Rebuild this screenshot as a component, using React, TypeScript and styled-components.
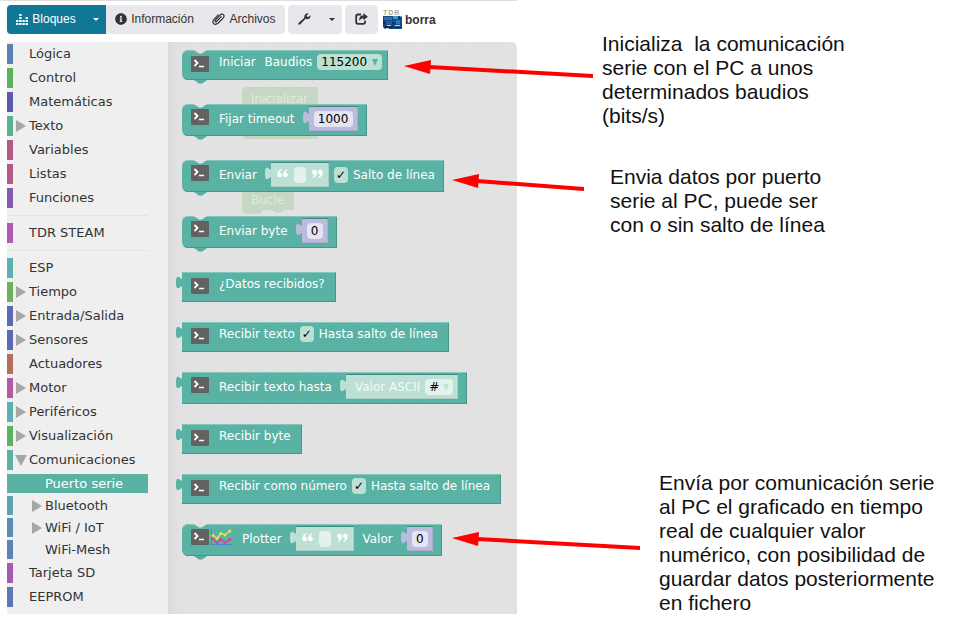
import React from 'react';
import styled, { createGlobalStyle } from 'styled-components';
import { FaInfoCircle } from 'react-icons/fa';

const TEAL = '#5ab2a5';
const MINT = '#bde0d4';
const LILAC = '#bcbbde';
const CANVAS = '#e2e2e2';

const GlobalStyle = createGlobalStyle`
  * { box-sizing: border-box; }
  body { margin: 0; background: #fff; }
  button, input, select { font: inherit; color: inherit; margin: 0; padding: 0; border: 0; }
`;

const Page = styled.div`
  position: relative;
  display: grid;
  grid-template-columns: minmax(0, 517px) minmax(0, 1fr);
  min-height: 100vh;
`;

const Editor = styled.main`
  display: flex;
  flex-direction: column;
  padding: 4px 0 10px 7px;
  border-top: 1px solid #dedede;
`;

/* ---------- Toolbar ---------- */

const Toolbar = styled.header`
  display: flex;
  align-items: center;
  height: 29px;
  margin-bottom: 8px;
  gap: 3px;
  font: 12px 'Liberation Sans', Arial, sans-serif;
  color: #333;
`;

const ButtonGroup = styled.div`
  display: flex;
  height: 29px;
  border-radius: 4px;
  overflow: hidden;
`;

const ToolButton = styled.button<{ $primary?: boolean; $width: number }>`
  display: flex;
  align-items: center;
  justify-content: center;
  gap: 4px;
  width: ${(p) => p.$width}px;
  height: 29px;
  padding-bottom: 1px;
  white-space: nowrap;
  background: ${(p) => (p.$primary ? '#107896' : '#e7e7ec')};
  color: ${(p) => (p.$primary ? '#fff' : '#333')};
  & + & { border-left: ${(p) => (p.$primary ? '1px solid #0c6580' : '0')}; }
`;

const Caret = styled.span`
  border: 3px solid transparent;
  border-top-color: currentColor;
  border-bottom: 0;
`;

const Project = styled.div`
  display: flex;
  align-items: center;
  gap: 2px;
  margin-left: 2px;
  font-weight: bold;
`;

/* ---------- Category tree ---------- */

const Workspace = styled.div`
  display: flex;
  flex: 1;
  border-top-right-radius: 6px;
  overflow: hidden;
`;

const Tree = styled.nav`
  flex: 0 0 161px;
  padding-top: 2px;
  background: #efefef;
  font: 13px/20px 'DejaVu Sans', sans-serif;
  color: #333;
`;

const TreeList = styled.ul<{ $nested?: boolean }>`
  display: flex;
  flex-direction: column;
  gap: ${(p) => (p.$nested ? 3 : 4)}px;
  width: 141px;
  margin: 0;
  padding: 0;
  list-style: none;
`;

const TreeRow = styled.a<{ $color: string; $nested?: boolean; $selected?: boolean }>`
  display: flex;
  align-items: center;
  height: ${(p) => (p.$nested ? 19 : 20)}px;
  padding-left: ${(p) => (p.$nested ? 18 : 2)}px;
  border-left: 6px solid ${(p) => p.$color};
  background: ${(p) => (p.$selected ? p.$color : 'transparent')};
  color: ${(p) => (p.$selected ? '#fff' : 'inherit')};
  text-decoration: none;
  white-space: nowrap;
`;

const Marker = styled.span`
  display: flex;
  flex: 0 0 14px;
`;

const TreeDivider = styled.li`
  height: 1px;
  margin: 3px 0;
  background: #e3e3e3;
`;

/* ---------- Block canvas ---------- */

const Canvas = styled.section`
  position: relative;
  flex: 1;
  min-width: 0;
  padding: 8px 0 0 14px;
  background:
    linear-gradient(90deg, #dadada, transparent 10px),
    radial-gradient(circle at 1px 1px, #dcdcdc 1px, transparent 1px) 7px 2px / 25px 25px,
    radial-gradient(circle at 1px 1px, #dcdcdc 1px, transparent 1px) 19px 2px / 25px 25px,
    radial-gradient(circle at 1px 1px, #dcdcdc 1px, transparent 1px) 7px 14px / 25px 25px,
    radial-gradient(circle at 1px 1px, #dcdcdc 1px, transparent 1px) 19px 14px / 25px 25px,
    ${CANVAS};
  font: 12px 'DejaVu Sans', sans-serif;
`;

const GhostBlock = styled.div<{ $x: number; $y: number; $w: number; $h: number }>`
  position: absolute;
  left: ${(p) => p.$x}px;
  top: ${(p) => p.$y}px;
  width: ${(p) => p.$w}px;
  height: ${(p) => p.$h}px;
  padding: 5px 9px;
  border-radius: 5px 0 0 5px;
  background: #c6d8c4;
  color: #e0e8de;
`;

const GhostBottom = styled.svg`
  position: absolute;
  left: 18px;
  bottom: 0;
`;

const BlockList = styled.div`
  position: relative;
  display: flex;
  flex-direction: column;
  align-items: flex-start;
`;

const BlockBody = styled.div<{ $tall?: boolean; $value?: boolean; $end: number }>`
  position: relative;
  display: flex;
  align-items: flex-start;
  height: ${(p) => (p.$tall ? 32 : 30)}px;
  margin-bottom: ${(p) => (p.$value ? 20 : 24)}px;
  padding: 0 ${(p) => p.$end}px 0 9px;
  border-radius: ${(p) => (p.$value ? '0' : '6px 0 0 6px')};
  background: ${TEAL};
  box-shadow: inset 0 1px #84c6bc, inset -1px -1px #48958a;
  color: #fff;
  white-space: nowrap;
`;

const BlockRow = styled.div<{ $tall?: boolean }>`
  display: flex;
  align-items: center;
  gap: 5px;
  height: ${(p) => (p.$tall ? 30 : 24)}px;
`;

const BlockIcons = styled.span<{ $tall?: boolean }>`
  display: flex;
  gap: 2px;
  margin: ${(p) => (p.$tall ? 5 : 6)}px 10px 0 0;
`;

const TopNotch = styled.svg`
  position: absolute;
  left: 12px;
  top: 0;
`;

const BottomTab = styled.svg`
  position: absolute;
  left: 12px;
  top: 100%;
`;

const OutputTab = styled.svg`
  position: absolute;
  left: -6px;
  top: 4px;
`;

const CheckLabel = styled.label`
  display: flex;
  align-items: center;
  gap: 5px;
`;

const Check = styled.input`
  display: flex;
  align-items: center;
  justify-content: center;
  appearance: none;
  width: 14px;
  height: 16px;
  border-radius: 4px;
  background: ${MINT};
  color: #000;
  font-weight: bold;
  line-height: 16px;
  &:checked::after { content: '✓'; }
`;

const SelectWrap = styled.span<{ $w: number; $pale?: boolean }>`
  position: relative;
  display: flex;
  width: ${(p) => p.$w}px;
  height: 16px;
  border-radius: 4px;
  background: ${(p) => (p.$pale ? '#e4f2ee' : MINT)};
  color: ${(p) => (p.$pale ? MINT : TEAL)};
`;

const Select = styled.select`
  appearance: none;
  width: 100%;
  padding-left: 4px;
  background: transparent;
  color: #000;
  line-height: 16px;
`;

const SelectArrow = styled.svg`
  position: absolute;
  right: 4px;
  top: 5px;
  pointer-events: none;
`;

const Nested = styled.span<{ $color: string }>`
  position: relative;
  display: flex;
  align-items: center;
  gap: 5px;
  height: 24px;
  padding: 0 5px;
  margin-left: 9px;
  background: ${(p) => p.$color};
  box-shadow: 0 -1px #418a80, inset -1px -1px rgba(0, 0, 0, 0.08);
`;

const NestedLabel = styled.span`
  padding-left: 4px;
  color: #f2faf7;
`;

const QuoteSvg = styled.svg`
  margin: 0 1px 3px;
`;

const Field = styled.input<{ $w: number; $pale?: boolean }>`
  width: ${(p) => p.$w}px;
  height: 16px;
  border-radius: 4px;
  background: ${(p) => (p.$pale ? '#e4f2ee' : '#e5e4f3')};
  color: #000;
  text-align: center;
`;

/* ---------- Annotations ---------- */

const Notes = styled.aside`
  display: flex;
  flex-direction: column;
  padding-top: 32px;
  font: 21px/24px 'Liberation Sans', Arial, sans-serif;
  color: #111;
`;

const Note = styled.p<{ $indent: number; $gap: number }>`
  margin: 0 0 ${(p) => p.$gap}px ${(p) => p.$indent}px;
  white-space: pre;
`;

const ArrowSvg = styled.svg<{ $x: number; $y: number }>`
  position: absolute;
  left: ${(p) => p.$x}px;
  top: ${(p) => p.$y}px;
  pointer-events: none;
`;

/* ---------- Icons ---------- */

const BlocksIcon = () => (
  <svg width="12" height="11" viewBox="0 0 12 11" fill="currentColor" aria-hidden="true">
    <path d="M0 9h2.400v2H0zM0 6h2.400v2H0zM3.200 9h2.400v2H3.200zM3.200 6h2.400v2H3.200zM3.200 3h2.400v2H3.200zM3.200 0h2.400v2H3.200zM6.400 9h2.400v2H6.400zM6.400 6h2.400v2H6.400zM9.600 9H12v2H9.600zM9.600 6H12v2H9.600zM9.600 3H12v2H9.600z" />
  </svg>
);

const ClipIcon = () => (
  <svg width="13" height="12" viewBox="0 0 13 12" fill="none" stroke="currentColor" strokeWidth="1.200" strokeLinecap="round" aria-hidden="true">
    <path d="M9.200 3.600 4.800 8.300Q3.800 9.200 3.300 8.500Q2.800 7.900 3.600 7L8 2.200Q9.700.4 11.200 1.500Q12.900 2.900 11.300 4.900L6.300 10Q3.600 12.200 1.700 10.700Q.1 8.900 1.600 6.900L6.200 1.900" />
  </svg>
);

const WrenchIcon = () => (
  <svg width="13" height="12" viewBox="0 0 13 12" fill="currentColor" aria-hidden="true">
    <path d="M10.600.4 8.700 2.500 9 3.700 10.200 4 12.400 2.200Q13 5.400 10 6.100Q8.600 6.300 7.600 5.800L2.300 11.300Q1.400 12.100.6 11.400Q-.1 10.600.7 9.700L6.400 4.700Q5.900 2.600 7.300 1.200Q8.800-.1 10.600.4Z" />
  </svg>
);

const ExportIcon = () => (
  <svg width="13" height="12" viewBox="0 0 13 12" fill="none" aria-hidden="true">
    <path d="M6 1.500H3Q1.200 1.500 1.200 3.300V9Q1.200 10.800 3 10.800H8.300Q10.100 10.800 10.100 9V7.800" stroke="#333" strokeWidth="1.800" />
    <path d="M8.500 0 12.800 3.700 8.500 7.300V5.200Q5.500 5 4.300 8Q3.600 2.500 8.500 2.200Z" fill="#333" />
  </svg>
);

const BoardIcon = () => (
  <svg width="20" height="21" viewBox="0 0 20 21" aria-hidden="true">
    <text x="0" y="6" fontSize="7" letterSpacing="1" fill="#a8a8a8" fontFamily="Liberation Sans">TDR</text>
    <path d="M0 7h17l2 1v12H2L0 18z" fill="#164a86" />
    <path d="M1 8h8v3H1z" fill="#2c6cb0" />
    <path d="M10 7h5v3h-5z" fill="#3a9ad8" />
    <path d="M3 12h9v3H3z" fill="#1c5da6" />
    <path d="M13 11h4v4h-4z" fill="#2a78bc" />
    <path d="M0 12h2v3H0zM1 17h9v2H2zM12 18h6v1h-6z" fill="#142a44" />
    <path d="M4 16h4v1H4zM12 16h5v1h-5zM3 19h3v1H3z" fill="#c3d3d6" />
    <path d="M15 8h2v2h-2z" fill="#10294c" />
    <path d="M9 13h3v2H9z" fill="#12345f" />
  </svg>
);

const TerminalIcon = () => (
  <svg width="18" height="16" viewBox="0 0 18 16" aria-hidden="true">
    <rect width="18" height="16" rx="1" fill="#626262" />
    <path d="M3.500 4 6.500 7 3.500 10" fill="none" stroke="#fff" strokeWidth="1.800" />
    <path d="M8 10.500h5" stroke="#fff" strokeWidth="1.500" />
  </svg>
);

const PlotIcon = () => (
  <svg width="21" height="16" viewBox="0 0 21 16" fill="none" aria-hidden="true">
    <path d="M.5 0v15.500H21" stroke="#3f8fd0" />
    <path d="M2 6.500 6 9.500 10 4.500 14 6 19.500 1.500" stroke="#e6e645" strokeWidth="1.500" />
    <path d="M2 10 6 14 10 10.500 14 13.500 19.500 10" stroke="#d8409c" strokeWidth="1.500" />
    <g fill="#e6e645"><circle cx="2" cy="6.500" r="1.400" /><circle cx="6" cy="9.500" r="1.400" /><circle cx="10" cy="4.500" r="1.400" /><circle cx="14" cy="6" r="1.400" /><circle cx="19" cy="2" r="1.400" /></g>
    <g fill="#d8409c"><circle cx="2" cy="10" r="1.400" /><circle cx="6" cy="14" r="1.400" /><circle cx="10" cy="10.500" r="1.400" /><circle cx="14" cy="13.500" r="1.400" /><circle cx="19" cy="10.500" r="1.400" /></g>
  </svg>
);

const QuoteIcon = ({ closing }: { closing?: boolean }) => (
  <QuoteSvg width="11" height="9" viewBox="0 0 11 9" fill="#fff" aria-hidden="true">
    <g transform={closing ? 'rotate(180 5.5 4.5)' : undefined}>
      <path d="M4.700.8Q2.900 1.800 2.800 3.500A2.400 2.400 0 1 1 .3 6Q0 2 4.300 0z" />
      <path d="M10.500.8Q8.700 1.800 8.600 3.500A2.400 2.400 0 1 1 6.100 6Q5.800 2 10.100 0z" />
    </g>
  </QuoteSvg>
);

const Tab = ({ color }: { color: string }) => (
  <OutputTab width="7" height="13" viewBox="0 0 8 15" preserveAspectRatio="none" aria-hidden="true">
    <path d="M8 0c0 10-8-8-8 7.500s8-2.500 8 7.500z" fill={color} />
  </OutputTab>
);

/* ---------- Blocks ---------- */

type BlockProps = {
  tall?: boolean;
  value?: boolean;
  plot?: boolean;
  end?: number;
  children: React.ReactNode;
};

const Block = ({ tall, value, plot, end = tall ? 9 : 11, children }: BlockProps) => (
  <BlockBody $tall={tall} $value={value} $end={end}>
    {value ? (
      <Tab color={TEAL} />
    ) : (
      <>
        <TopNotch width="13" height="4" viewBox="0 0 13 4" aria-hidden="true">
          <path d="M0 0 5 3.500H8L13 0z" fill={CANVAS} />
        </TopNotch>
        <BottomTab width="13" height="4" viewBox="0 0 13 4" aria-hidden="true">
          <path d="M0 0 5 3.500H8L13 0z" fill="#4d9f93" />
          <path d="M0 0 5 2.500H8L13 0z" fill={TEAL} />
        </BottomTab>
      </>
    )}
    <BlockIcons $tall={tall}>
      <TerminalIcon />
      {plot && <PlotIcon />}
    </BlockIcons>
    <BlockRow $tall={tall}>{children}</BlockRow>
  </BlockBody>
);

const NumberValue = ({ value, width, label }: { value: string; width: number; label: string }) => (
  <Nested $color={LILAC}>
    <Tab color={LILAC} />
    <Field $w={width} defaultValue={value} aria-label={label} />
  </Nested>
);

const TextValue = ({ label }: { label: string }) => (
  <Nested $color={MINT}>
    <Tab color={MINT} />
    <QuoteIcon />
    <Field $w={12} $pale aria-label={label} />
    <QuoteIcon closing />
  </Nested>
);

const Dropdown = ({ options, width, pale, label }: { options: string[]; width: number; pale?: boolean; label: string }) => (
  <SelectWrap $w={width} $pale={pale}>
    <Select aria-label={label}>
      {options.map((o) => <option key={o}>{o}</option>)}
    </Select>
    <SelectArrow width="6" height="7" viewBox="0 0 6 7" aria-hidden="true">
      <path d="M0 0h6L3 7z" fill="currentColor" />
    </SelectArrow>
  </SelectWrap>
);

const Toggle = ({ children }: { children: string }) => (
  <CheckLabel><Check type="checkbox" defaultChecked />{children}</CheckLabel>
);

/* ---------- Tree data ---------- */

type Category = {
  name: string;
  color: string;
  marker?: 'closed' | 'open';
  selected?: boolean;
  children?: Category[];
};

const groups: Category[][] = [
  [
    { name: 'Lógica', color: '#5b80b2' },
    { name: 'Control', color: '#5ab25a' },
    { name: 'Matemáticas', color: '#5b59b0' },
    { name: 'Texto', color: '#5ab28e', marker: 'closed' },
    { name: 'Variables', color: '#b25a84' },
    { name: 'Listas', color: '#b25a84' },
    { name: 'Funciones', color: '#845ab2' },
  ],
  [{ name: 'TDR STEAM', color: '#ac5ab2' }],
  [
    { name: 'ESP', color: '#5ab2b0' },
    { name: 'Tiempo', color: '#67b25a', marker: 'closed' },
    { name: 'Entrada/Salida', color: '#5a69b2', marker: 'closed' },
    { name: 'Sensores', color: '#5a69b2', marker: 'closed' },
    { name: 'Actuadores', color: '#b26f5a' },
    { name: 'Motor', color: '#b25aa4', marker: 'closed' },
    { name: 'Periféricos', color: '#5ab2b0', marker: 'closed' },
    { name: 'Visualización', color: '#5ab262', marker: 'closed' },
    {
      name: 'Comunicaciones', color: TEAL, marker: 'open', children: [
        { name: 'Puerto serie', color: TEAL, selected: true },
        { name: 'Bluetooth', color: '#5aa4b2', marker: 'closed' },
        { name: 'WiFi / IoT', color: '#5a8eb2', marker: 'closed' },
        { name: 'WiFi-Mesh', color: '#5b84b2' },
      ],
    },
    { name: 'Tarjeta SD', color: '#a35ab2' },
    { name: 'EEPROM', color: '#5a78b2' },
  ],
];

const CategoryItem = ({ item, nested }: { item: Category; nested?: boolean }) => (
  <>
    <li>
      <TreeRow href="#" $color={item.color} $nested={nested} $selected={item.selected}>
        <Marker>
          {item.marker && (
            <svg width="12" height="12" viewBox="0 0 12 12" fill="#a6a6a6" aria-hidden="true">
              <path d={item.marker === 'open' ? 'M0 1h12L6 12z' : 'M1 0 11 6 1 12z'} />
            </svg>
          )}
        </Marker>
        {item.name}
      </TreeRow>
    </li>
    {item.children && (
      <li>
        <TreeList $nested>
          {item.children.map((c) => <CategoryItem key={c.name} item={c} nested />)}
        </TreeList>
      </li>
    )}
  </>
);

const Arrow = ({ x, y, length, drop }: { x: number; y: number; length: number; drop: number }) => (
  <ArrowSvg $x={x} $y={y} width={length} height="24" viewBox={`0 0 ${length} 24`} aria-hidden="true">
    <path d={`M25 7 ${length} ${7 + drop}`} stroke="#f00" strokeWidth="4" />
    <path d="M0 6 27 0 26 14z" fill="#f00" />
  </ArrowSvg>
);

export default function App() {
  return (
    <Page>
      <GlobalStyle />
      <Editor>
        <Toolbar>
          <ButtonGroup>
            <ToolButton $primary $width={78}><BlocksIcon />Bloques</ToolButton>
            <ToolButton $primary $width={21} aria-label="Más vistas"><Caret /></ToolButton>
            <ToolButton $width={97}><FaInfoCircle size={12} />Información</ToolButton>
            <ToolButton $width={82}><ClipIcon />Archivos</ToolButton>
          </ButtonGroup>
          <ButtonGroup>
            <ToolButton $width={33} aria-label="Herramientas"><WrenchIcon /></ToolButton>
            <ToolButton $width={21} aria-label="Más herramientas"><Caret /></ToolButton>
          </ButtonGroup>
          <ButtonGroup>
            <ToolButton $width={33} aria-label="Compartir"><ExportIcon /></ToolButton>
          </ButtonGroup>
          <Project><BoardIcon />borra</Project>
        </Toolbar>
        <Workspace>
          <Tree aria-label="Categorías">
            <TreeList>
              {groups.map((group, i) => (
                <React.Fragment key={group[0].name}>
                  {i > 0 && <TreeDivider role="separator" />}
                  {group.map((item) => <CategoryItem key={item.name} item={item} />)}
                </React.Fragment>
              ))}
            </TreeList>
          </Tree>
          <Canvas>
            <GhostBlock $x={74} $y={45} $w={76} $h={52}>Inicializar</GhostBlock>
            <GhostBlock $x={74} $y={146} $w={52} $h={26}>
              Bucle
              <GhostBottom width="34" height="4" viewBox="0 0 34 4" aria-hidden="true">
                <path d="M0 4Q1 1 4 0H12l4 3h4l4-3h10v4z" fill={CANVAS} />
              </GhostBottom>
            </GhostBlock>
            <BlockList>
              <Block end={6}>
                <span>Iniciar</span>
                <span>&nbsp;Baudios</span>
                <Dropdown label="Baudios" width={65} options={['115200', '57600', '9600']} />
              </Block>
              <Block tall>
                <span>Fijar timeout</span>
                <NumberValue label="Timeout" value="1000" width={39} />
              </Block>
              <Block tall>
                <span>Enviar</span>
                <TextValue label="Texto a enviar" />
                <Toggle>Salto de línea</Toggle>
              </Block>
              <Block tall>
                <span>Enviar byte</span>
                <NumberValue label="Byte" value="0" width={16} />
              </Block>
              <Block value><span>¿Datos recibidos?</span></Block>
              <Block value>
                <span>Recibir texto</span>
                <Toggle>Hasta salto de línea</Toggle>
              </Block>
              <Block value tall>
                <span>Recibir texto hasta</span>
                <Nested $color={MINT}>
                  <Tab color={MINT} />
                  <NestedLabel>Valor ASCII</NestedLabel>
                  <Dropdown pale label="Valor ASCII" width={28} options={['#', '$', '%']} />
                </Nested>
              </Block>
              <Block value><span>Recibir byte</span></Block>
              <Block value>
                <span>Recibir como número</span>
                <Toggle>Hasta salto de línea</Toggle>
              </Block>
              <Block tall plot>
                <span>Plotter</span>
                <TextValue label="Nombre" />
                <span>&nbsp;Valor</span>
                <NumberValue label="Valor" value="0" width={16} />
              </Block>
            </BlockList>
          </Canvas>
        </Workspace>
      </Editor>
      <Notes>
        <Note $indent={85} $gap={37}>{'Inicializa  la comunicación\nserie con el PC a unos\ndeterminados baudios\n(bits/s)'}</Note>
        <Note $indent={93} $gap={234}>{'Envia datos por puerto\nserie al PC, puede ser\ncon o sin salto de línea'}</Note>
        <Note $indent={142} $gap={0}>{'Envía por comunicación serie\nal PC el graficado en tiempo\nreal de cualquier valor\nnumérico, con posibilidad de\nguardar datos posteriormente\nen fichero'}</Note>
      </Notes>
      <Arrow x={404} y={60} length={189} drop={9} />
      <Arrow x={452} y={174} length={132} drop={8} />
      <Arrow x={452} y={532} length={188} drop={9} />
    </Page>
  );
}
